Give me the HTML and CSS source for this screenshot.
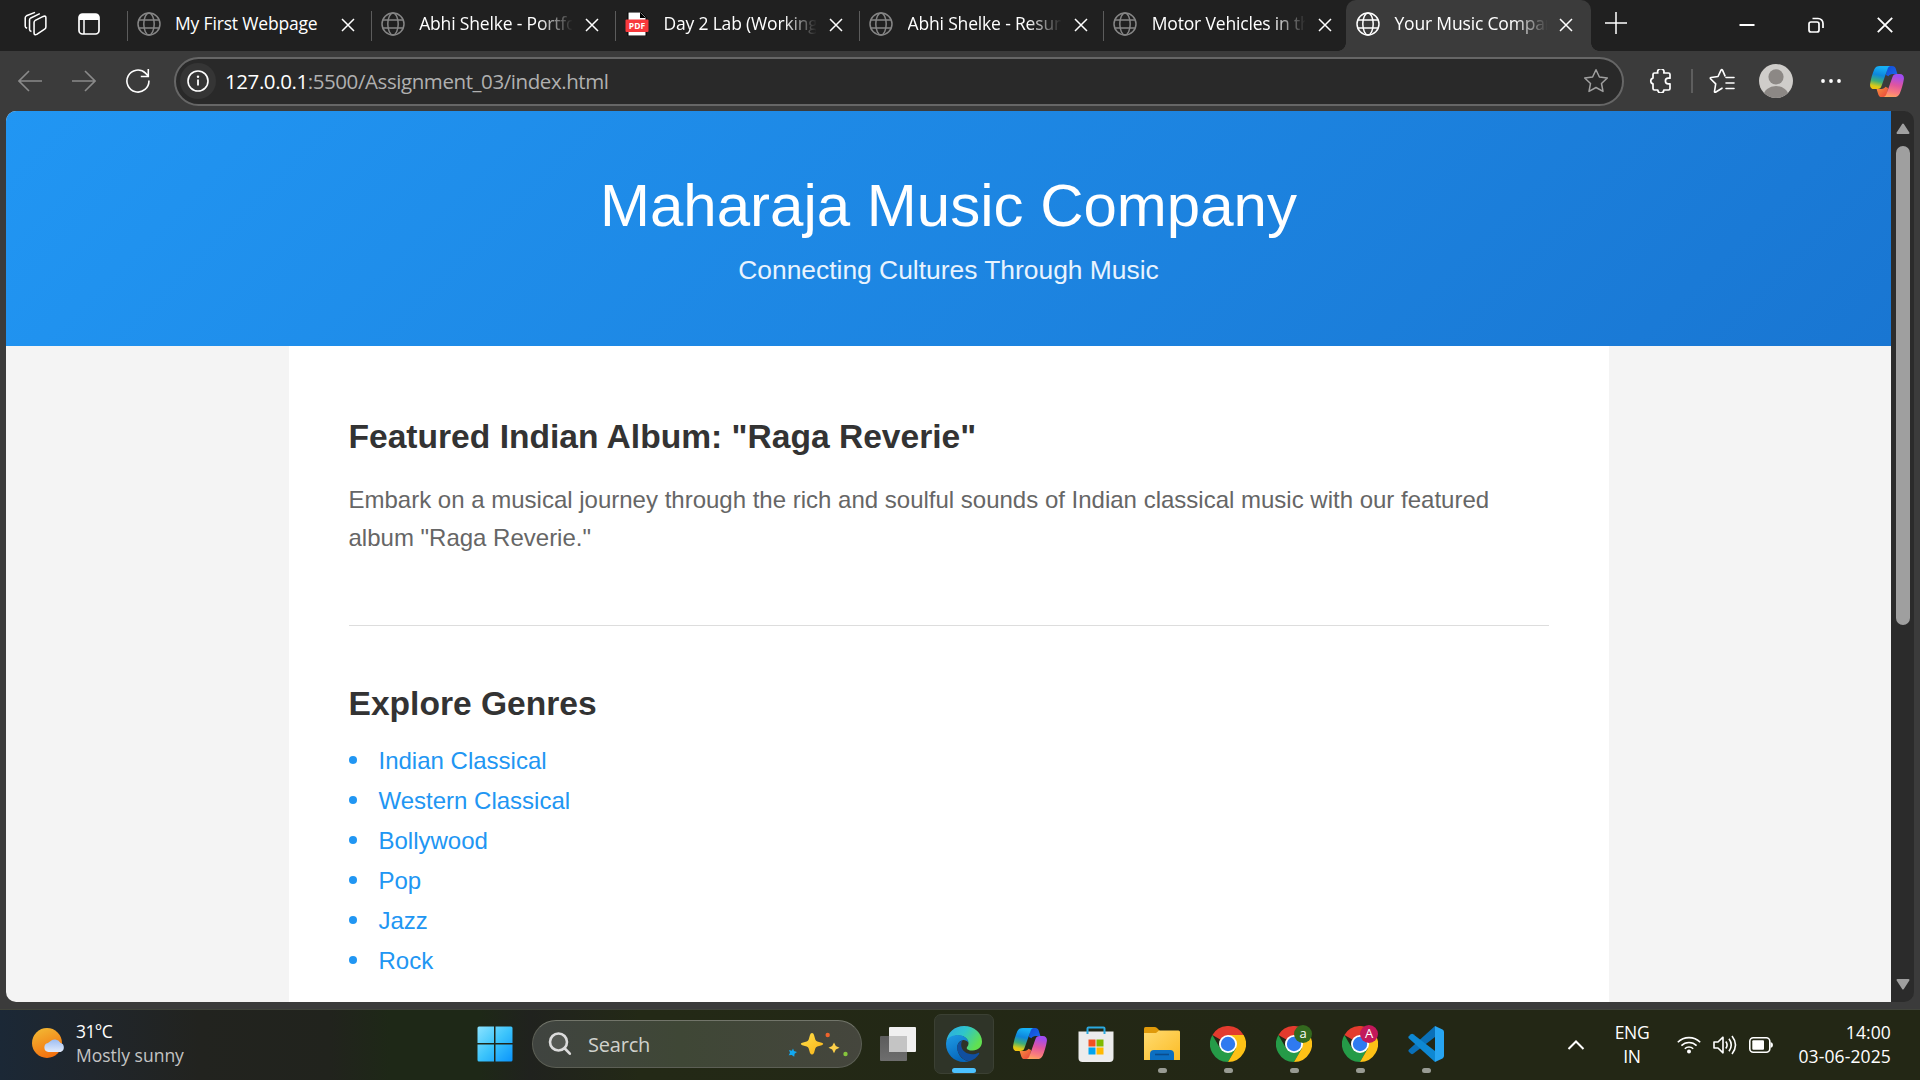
FILE: index.html
```html
<!DOCTYPE html>
<html lang="en">
<head>
<meta charset="utf-8">
<title>Your Music Company</title>
<link rel="stylesheet" href="styles.css">
</head>
<body>
<svg class="defs" width="0" height="0">
  <defs>
    <linearGradient id="cpBlue" x1=".3" y1="0" x2=".1" y2="1"><stop offset="0" stop-color="#17b0f5"/><stop offset=".35" stop-color="#0e86dc"/><stop offset=".62" stop-color="#3fae78"/><stop offset=".85" stop-color="#dccb17"/><stop offset="1" stop-color="#f8c10c"/></linearGradient>
    <linearGradient id="cpPink" x1=".2" y1="0" x2="0" y2="1"><stop offset="0" stop-color="#a14cf0"/><stop offset=".4" stop-color="#e0559f"/><stop offset=".75" stop-color="#fb7f7b"/><stop offset="1" stop-color="#fdb055"/></linearGradient>
    <linearGradient id="cpNavy" x1="0" y1="0" x2="1" y2="1"><stop offset="0" stop-color="#124bd2"/><stop offset="1" stop-color="#1c6af0"/></linearGradient>
    <linearGradient id="cpRed" x1="0" y1="0" x2="1" y2="1"><stop offset="0" stop-color="#f9943e"/><stop offset="1" stop-color="#e8433c"/></linearGradient>
    <linearGradient id="winG" x1="0" y1="0" x2="1" y2="1"><stop offset="0" stop-color="#8be3ff"/><stop offset=".5" stop-color="#3cc4fb"/><stop offset="1" stop-color="#0a94fb"/></linearGradient>
    <linearGradient id="sunG" x1=".3" y1="0" x2=".7" y2="1"><stop offset="0" stop-color="#f2b632"/><stop offset="1" stop-color="#f36c0d"/></linearGradient>
    <linearGradient id="cloudG" x1="0" y1="0" x2="0" y2="1"><stop offset="0" stop-color="#9dbdf2"/><stop offset="1" stop-color="#e2ebfc"/></linearGradient>
    <linearGradient id="edgeTop" x1="0" y1="0" x2="1" y2=".5"><stop offset="0" stop-color="#2ba7e6"/><stop offset=".5" stop-color="#2fc5cb"/><stop offset="1" stop-color="#61e050"/></linearGradient>
    <linearGradient id="edgeMid" x1="0" y1="0" x2=".4" y2="1"><stop offset="0" stop-color="#1f9be5"/><stop offset="1" stop-color="#0668bd"/></linearGradient>
    <linearGradient id="folderG" x1="0" y1="0" x2="1" y2="1"><stop offset="0" stop-color="#ffdb70"/><stop offset="1" stop-color="#fbbc26"/></linearGradient>
    <linearGradient id="starG" x1="0" y1="0" x2="1" y2="1"><stop offset="0" stop-color="#ffe04a"/><stop offset="1" stop-color="#f9b216"/></linearGradient>
    <linearGradient id="viewG" x1="0" y1="0" x2="0" y2="1"><stop offset="0" stop-color="#5c5c5c"/><stop offset="1" stop-color="#6e6e6e"/></linearGradient>
    <symbol id="globe" viewBox="0 0 24 24"><g fill="none" stroke="currentColor" stroke-width="1.5"><circle cx="12" cy="12" r="11"/><ellipse cx="12" cy="12" rx="5.2" ry="11"/><path d="M1.9 8h20.2M1.9 16h20.2"/></g></symbol>
    <symbol id="close" viewBox="0 0 14 14"><path d="M1 1l12 12M13 1L1 13" stroke="currentColor" stroke-width="1.5" fill="none"/></symbol>
    <symbol id="copilot" viewBox="0 0 34 31">
      <path d="M17 0h5.200c2 0 3 .9 3.500 2.600L27.400 8h-4.500c-2.500 0-3.700 1-4.400 2.200L16 9z" fill="url(#cpNavy)"/>
      <path d="M17 31h-5.200c-2 0-3-.9-3.500-2.600L6.600 23h4.500c2.500 0 3.700-1 4.400-2.200L18 22z" fill="url(#cpRed)"/>
      <path d="M10 0h10.400c-1.700.4-2.500 1.700-3 3.500l-5.700 16.100c-.7 2.400-1.900 3.500-4.300 3.500H4.200C1 23.100-.4 20.700.2 17.500.8 13.500 2.300 7.900 4.200 3.600 5.300 1.100 7 0 10 0z" fill="url(#cpBlue)"/>
      <path d="M24 31H13.600c1.700-.4 2.500-1.700 3-3.500l5.700-16.100c.7-2.400 1.900-3.500 4.300-3.500h3.200c3.200 0 4.600 2.400 4 5.600-.6 4-2.100 9.600-4 13.900C28.700 29.900 27 31 24 31z" fill="url(#cpPink)"/>
    </symbol>
    <symbol id="chrome" viewBox="0 0 36 36">
      <path d="M18 18L2.400 9A18 18 0 0 1 33.600 9z" fill="#e33b2e"/>
      <path d="M25.800 22.500L18 36A18 18 0 0 1 2.400 9l7.800 13.500z" fill="#259b48"/>
      <path d="M33.600 9H18v9l7.800 4.500L18 36A18 18 0 0 0 33.600 9z" fill="#fdc116"/>
      <circle cx="18" cy="18" r="9" fill="#fff"/><circle cx="18" cy="18" r="7.200" fill="#2f7af0"/>
    </symbol>
  </defs>
</svg>

<div class="screen">
  <div class="tabstrip">
    <div class="strip-tools">
      <svg width="26" height="26" viewBox="0 0 26 26" fill="none" stroke="#fff" stroke-width="1.600" stroke-linejoin="round"><path d="M11.500 11.500q0-1.500 1.300-2.200l8.200-4.200q2.800-1 2.800 1.500v9.500q0 1.500-1.300 2.200l-8.200 5.500q-2.800 1-2.800-1.500z"/><path d="M8.800 20.800q-2-.5-2-2V8.900q0-1.500 1.300-2.200l9.400-4.500"/><path d="M4.300 17.500q-2-.7-2-2.200V6.700q0-1.500 1.300-2.200L12.500.9"/></svg>
      <svg width="22" height="22" viewBox="0 0 22 22"><rect x="1" y="1" width="20" height="20" rx="3.500" fill="none" stroke="#fff" stroke-width="1.700"/><path d="M1 7V4a3 3 0 0 1 3-3h14a3 3 0 0 1 3 3v3z" fill="#fff"/><path d="M6 7v14" stroke="#fff" stroke-width="1.500"/></svg>
    </div>
    <div class="tab"><svg class="fav"><use href="#globe"/></svg><span class="tab-title">My First Webpage</span><svg class="x"><use href="#close"/></svg></div>
    <div class="tab"><svg class="fav"><use href="#globe"/></svg><span class="tab-title fade">Abhi Shelke - Portfolio</span><svg class="x"><use href="#close"/></svg></div>
    <div class="tab"><svg class="fav" viewBox="0 0 24 24"><path d="M3 0h13l5 5v19H3z" fill="#fff" stroke="#000"/><path d="M15 0v6h6z" fill="#000"/><rect x=".5" y="7.500" width="23" height="12.500" rx="1" fill="#f8393c"/><text x="12" y="17" class="pdf-text">PDF</text></svg><span class="tab-title fade">Day 2 Lab (Working)</span><svg class="x"><use href="#close"/></svg></div>
    <div class="tab"><svg class="fav"><use href="#globe"/></svg><span class="tab-title fade">Abhi Shelke - Resume</span><svg class="x"><use href="#close"/></svg></div>
    <div class="tab"><svg class="fav"><use href="#globe"/></svg><span class="tab-title fade">Motor Vehicles in the</span><svg class="x"><use href="#close"/></svg></div>
    <div class="tab active"><svg class="fav"><use href="#globe"/></svg><span class="tab-title fade">Your Music Company</span><svg class="x"><use href="#close"/></svg></div>
    <svg class="newtab" width="22" height="22" viewBox="0 0 22 22"><path d="M11 0v22M0 11h22" stroke="#fff" stroke-width="1.500"/></svg>
    <div class="winctl">
      <svg width="16" height="16" viewBox="0 0 16 16"><path d="M.5 8h15" stroke="#fff" stroke-width="2"/></svg>
      <svg width="16" height="16" viewBox="0 0 16 16" fill="none" stroke="#fff" stroke-width="1.700"><rect x="1" y="5" width="10" height="10" rx="2"/><path d="M4.500 1.500H10a5 5 0 0 1 5 5V11"/></svg>
      <svg width="16" height="16" viewBox="0 0 14 14"><path d="M.7.7l12.600 12.600M13.300.7L.7 13.300" stroke="#fff" stroke-width="1.600"/></svg>
    </div>
  </div>

  <div class="toolbar">
    <div class="nav">
      <svg width="24" height="24" viewBox="0 0 24 24" class="dim"><path d="M24 12H1M11 2L1 12l10 10"/></svg>
      <svg width="24" height="24" viewBox="0 0 24 24" class="dim"><path d="M0 12h23M13 2l10 10-10 10"/></svg>
      <svg width="24" height="24" viewBox="0 0 24 24" class="lit"><path d="M22.900 11.500A11 11 0 1 1 19.500 4.100L22 6.800M22.300 0v7.500h-7.500"/></svg>
    </div>
    <div class="address">
      <span class="info"><svg width="22" height="22" viewBox="0 0 22 22"><circle cx="11" cy="11" r="10" fill="none" stroke="#fff" stroke-width="1.600"/><path d="M11 9.500v6" stroke="#fff" stroke-width="1.800"/><circle cx="11" cy="6.800" r="1.200" fill="#fff"/></svg></span>
      <span class="url"><b>127.0.0.1</b>:5500/Assignment_03/index.html</span>
      <svg width="26" height="26" viewBox="0 0 26 26" fill="none" stroke="#a0a0a0" stroke-width="1.500" stroke-linejoin="round"><path d="M13 1.800l3.400 7.200 7.900 1-5.800 5.500 1.500 7.900-7-3.900-7 3.900 1.500-7.900L1.700 10l7.900-1z"/></svg>
    </div>
    <div class="actions">
      <svg width="24" height="24" viewBox="0 0 24 24" fill="none" stroke="#fff" stroke-width="1.700" stroke-linejoin="round"><path d="M4 5.500Q4 4 5.500 4h3.300a3.200 3.200 0 1 1 6 0h4.700Q21 4 21 5.500v3.700h-1.800a2.800 2.800 0 0 0 0 5.600H21v4.700q0 1.500-1.500 1.500h-4.700a3 3 0 0 1-6 0H5.500Q4 21 4 19.500v-4.600a3 3 0 0 1 0-5.800z"/></svg>
      <i class="vline"></i>
      <svg width="26" height="26" viewBox="0 0 26 26" fill="none" stroke="#fff" stroke-width="1.600" stroke-linejoin="round" stroke-linecap="round"><path d="M13 20.200l-6.500 4q-1.200.4-1-.9l1.200-7.400L1.500 10.700q-.7-1 .6-1.200l6.900-1L12 2.200q.8-1.200 1.500 0l2.500 5.600M17 9.500h8M17 15h8M17 20.500h8"/></svg>
      <svg width="34" height="34" viewBox="0 0 34 34"><clipPath id="av"><circle cx="17" cy="17" r="17"/></clipPath><g clip-path="url(#av)"><rect width="34" height="34" fill="#cfcdca"/><circle cx="17" cy="12.800" r="7.600" fill="#8c8885"/><ellipse cx="17" cy="32" rx="12.500" ry="10" fill="#8c8885"/></g></svg>
      <svg width="20" height="6" viewBox="0 0 20 6" fill="#fff"><circle cx="2" cy="3" r="1.900"/><circle cx="10" cy="3" r="1.900"/><circle cx="18" cy="3" r="1.900"/></svg>
      <svg class="side" width="34" height="31"><use href="#copilot"/></svg>
    </div>
  </div>

  <div class="viewport">
    <div class="page">
      <header class="hero">
        <h1>Maharaja Music Company</h1>
        <p>Connecting Cultures Through Music</p>
      </header>
      <main class="content">
        <section class="album">
          <h2>Featured Indian Album: "Raga Reverie"</h2>
          <p>Embark on a musical journey through the rich and soulful sounds of Indian classical music with our featured album "Raga Reverie."</p>
        </section>
        <section class="genres">
          <h2>Explore Genres</h2>
          <ul>
            <li>Indian Classical</li><li>Western Classical</li><li>Bollywood</li><li>Pop</li><li>Jazz</li><li>Rock</li>
          </ul>
        </section>
      </main>
    </div>
    <div class="scrollbar">
      <svg width="14" height="12" viewBox="0 0 14 12"><path d="M7 1.500L12.500 10h-11z" fill="#9f9f9f" stroke="#9f9f9f" stroke-width="2" stroke-linejoin="round"/></svg>
      <i class="thumb"></i>
      <svg width="14" height="12" viewBox="0 0 14 12"><path d="M7 10.500L12.500 2h-11z" fill="#9f9f9f" stroke="#9f9f9f" stroke-width="2" stroke-linejoin="round"/></svg>
    </div>
  </div>

  <div class="taskbar">
    <div class="weather">
      <svg width="34" height="32" viewBox="0 0 34 32"><circle cx="15" cy="15" r="15" fill="url(#sunG)"/><path d="M16.500 24a4.500 4.500 0 0 1-.5-8.900 5.500 5.500 0 0 1 2-1.700 6.500 6.500 0 0 1 10.300 1.400A4.800 4.800 0 0 1 28.500 24z" fill="url(#cloudG)"/></svg>
      <div class="weather-text"><span>31°C</span><span class="muted">Mostly sunny</span></div>
    </div>
    <div class="dock">
      <svg class="start" width="36" height="36" viewBox="0 0 36 36" fill="url(#winG)"><path d="M2 .5h15v16.500H.5V2Q.5.500 2 .5zM18.500.5h15.500q1.500 0 1.500 1.500v15h-17zM.5 18.500H17v17H2Q.5 35.500.5 34zM18.500 18.500h17V34q0 1.500-1.500 1.500H18.500z"/></svg>
      <div class="search">
        <svg width="24" height="24" viewBox="0 0 24 24" fill="none" stroke="#dcdcdc" stroke-width="2.600" stroke-linecap="round"><circle cx="10.500" cy="10" r="8.500" fill="#ffffff1c"/><path d="M16.800 16.500l5 5.200"/></svg>
        <span>Search</span>
        <svg width="62" height="26" viewBox="0 0 62 26"><path d="M24 2q1.500 0 2 2l1.300 4.500q.5 1.500 2 2l4.400 1.300q3 1.200 0 2.400l-4.400 1.300q-1.500.5-2 2L26 22q-2 3-4 0l-1.300-4.500q-.5-1.500-2-2l-4.400-1.300q-3-1.200 0-2.400l4.400-1.300q1.500-.5 2-2L22 4q.5-2 2-2z" fill="url(#starG)"/><path d="M46 11.500l1.800 3.500 3.700 1.800-3.700 1.800-1.800 3.700-1.800-3.700-3.700-1.800 3.700-1.800z" fill="#fdd049"/><path d="M5 17.500l1 2.600 3 .9-2.400 1.800-.4 2.900-2.500-1.800-3 .3 1.300-2.500-1-2.600 2.900.6z" fill="#12a8f0"/><circle cx="39.700" cy="4" r="2.200" fill="#f0642c"/><circle cx="57.500" cy="23" r="2.200" fill="#86c53c"/></svg>
      </div>
      <div class="apps">
        <div class="app"><svg width="36" height="34" viewBox="0 0 36 34"><rect x="9" width="27" height="25" rx="1" fill="#f0f0f0"/><rect y="9" width="27" height="25" rx="1" fill="url(#viewG)"/><path d="M9 9h18v16H9z" fill="#c4c4c4"/></svg></div>
        <div class="app current"><svg width="36" height="36" viewBox="0 0 36 36"><path d="M.3 16C1.200 6.500 8.600 0 18 0c10.500 0 18 7.500 18 15.500 0 5.500-4 9-9.300 9-3.500 0-6-1.100-6-2.600 0-1 1.800-1.800 1.800-4.400C22.500 13 18 9.500 12.500 9.500 7 9.500 2.500 12 .3 16z" fill="url(#edgeTop)"/><path d="M0 18c0-5 5-8.900 11.500-8.900 6 0 10.500 3.300 11 7.600-1.500-2.200-4-2.900-6-2.500-3.500.8-5.500 4-5.200 8C11.700 29 17 35 23.500 35.200 21.800 35.800 20 36 18 36 8 36 0 28 0 18z" fill="url(#edgeMid)"/><path d="M16.500 14.200C12.500 16 10.800 19 11.300 23c.7 6 6 11.500 12.200 12.300 4-1.300 7.500-4 9.600-7.300.5-1-.3-1.400-1-1-1.700.9-3.600 1.300-5.600 1.300-6.500 0-11.300-4.200-11.300-9.300 0-2 .5-3.600 1.300-4.800z" fill="#104fa0"/></svg><i></i></div>
        <div class="app"><svg width="34" height="31"><use href="#copilot"/></svg></div>
        <div class="app"><svg width="36" height="36" viewBox="0 0 36 36"><path d="M.5 5.500h35V32q0 4-4 4h-27q-4 0-4-4z" fill="#ececec"/><path d="M9.500 8V2.500q0-1 1-1h15q1 0 1 1V8" fill="none" stroke="#2aa9e0" stroke-width="2"/><path d="M10.500 13.500h7v7h-7z" fill="#f25022"/><path d="M18.500 13.500h7v7h-7z" fill="#7fba00"/><path d="M10.500 21.500h7v7h-7z" fill="#00a4ef"/><path d="M18.500 21.500h7v7h-7z" fill="#ffb900"/></svg></div>
        <div class="app open"><svg width="36" height="34" viewBox="0 0 36 34"><path d="M0 1.500Q0 0 1.500 0h9q1.500 0 2.500 1l2.500 2.500V8H0z" fill="#e09a0a"/><path d="M0 6h12l3-2.500h19.500Q36 3.500 36 5v28H0z" fill="url(#folderG)"/><path d="M6 33v-6q0-4 4-4h16q4 0 4 4v6z" fill="#0c6fc2"/><path d="M11 27.500h14" stroke="#0a4c8c" stroke-width="1.600"/></svg><i></i></div>
        <div class="app open"><svg width="36" height="36"><use href="#chrome"/></svg><i></i></div>
        <div class="app open"><svg width="36" height="36"><use href="#chrome"/></svg><span class="badge green">a</span><i></i></div>
        <div class="app open"><svg width="36" height="36"><use href="#chrome"/></svg><span class="badge pink">A</span><i></i></div>
        <div class="app open"><svg width="36" height="36" viewBox="0 0 36 36"><path d="M27 0L1 23.500q-1.300 1.300 0 2.500l2 1.800q1 .8 2.200 0L27 11z" fill="#0a70b8"/><path d="M27 36L1 12.500q-1.300-1.300 0-2.500l2-1.800q1-.8 2.200 0L27 25z" fill="#0e88d3"/><path d="M27 0l7.500 3.600Q36 4.500 36 6v24q0 1.500-1.500 2.400L27 36z" fill="#27a5f2"/></svg><i></i></div>
      </div>
    </div>
    <div class="tray">
      <svg class="chev" width="18" height="12" viewBox="0 0 18 12"><path d="M1.500 10L9 2.500l7.500 7.500" fill="none" stroke="#fff" stroke-width="2"/></svg>
      <div class="lang"><span>ENG</span><span>IN</span></div>
      <svg width="24" height="18" viewBox="0 0 24 18" fill="none" stroke="#fff" stroke-width="1.600"><path d="M.8 6.300a15.800 15.800 0 0 1 22.400 0M4.400 9.600a10.800 10.800 0 0 1 15.200 0M7.800 12.700a6 6 0 0 1 8.400 0"/><circle cx="12" cy="15.500" r="2" fill="#fff" stroke="none"/></svg>
      <svg width="24" height="20" viewBox="0 0 24 20" fill="none" stroke="#fff" stroke-width="1.600" stroke-linejoin="round"><path d="M1 7v6h4l5 4.800V2.200L5 7zM12.800 6.500q2.600 3.500 0 7M16 3.800q4.500 6.200 0 12.400M19 1q7 9 0 18"/></svg>
      <svg width="24" height="16" viewBox="0 0 24 16"><rect x=".8" y=".8" width="20" height="14.400" rx="3.500" fill="none" stroke="#fff" stroke-width="1.600"/><rect x="3.300" y="3.300" width="11.700" height="9.400" rx="1" fill="#fff"/><path d="M21.500 5q2.500.5 2.500 3t-2.500 3z" fill="#fff"/></svg>
      <div class="clock"><span>14:00</span><span>03-06-2025</span></div>
    </div>
  </div>
</div>
</body>
</html>
```

FILE: styles.css
```css
* { box-sizing: border-box; }
body { margin: 0; overflow: hidden; font-family: "Open Sans", "Noto Sans", sans-serif; color: #fff; }
.defs { position: absolute; }
svg { display: block; flex: none; }
.screen { width: 1920px; height: 1080px; display: flex; flex-direction: column; background: #3b3b3b; overflow: hidden; }

/* tab strip */
.tabstrip { height: 51px; flex: none; display: flex; background: #202020; }
.strip-tools { width: 126.500px; display: flex; gap: 30px; padding: 11px 0 0 23px; flex: none; }
.strip-tools svg:first-child { width: 25px; }
.strip-tools svg + svg { margin-top: 2px; }
.tab { width: 244.200px; height: 51px; flex: none; display: flex; padding: 12px 0 0 10px; position: relative; }
.tab::before { content: ""; position: absolute; left: 0; top: 11px; width: 1px; height: 30px; background: #5c5c5c; }
.tab.active { width: 245px; margin-left: -1.500px; background: #3b3b3b; border-radius: 10px 10px 0 0; }
.tab.active::before, .tab.active::after { top: auto; bottom: 0; width: 8px; height: 8px; background: radial-gradient(circle at 0 0, transparent 7.500px, #3b3b3b 8px); }
.tab.active::before { left: -8px; }
.tab.active::after { content: ""; position: absolute; right: -8px; background: radial-gradient(circle at 100% 0, transparent 7.500px, #3b3b3b 8px); }
.fav { width: 24px; height: 24px; color: #858585; }
.active .fav { color: #fff; }
.pdf-text { font: 700 8.500px "Open Sans", sans-serif; fill: #fff; text-anchor: middle; }
.tab-title { width: 153px; margin-left: 14.500px; font-size: 17.500px; line-height: 23px; letter-spacing: -.17px; white-space: nowrap; overflow: hidden; }
.fade { -webkit-mask-image: linear-gradient(90deg, #000 120px, transparent 154px); mask-image: linear-gradient(90deg, #000 120px, transparent 154px); }
.x { width: 14px; height: 14px; margin: 6px 0 0 13px; }
.active .x { margin-left: 11.500px; }
.newtab { margin: 12px 0 0 14px; }
.winctl { margin-left: auto; display: flex; gap: 53px; padding: 17px 27px 0 0; }

/* toolbar */
.toolbar { height: 60px; flex: none; display: flex; align-items: center; padding-left: 18px; }
.nav { display: flex; gap: 30px; width: 156px; }
.nav svg { fill: none; stroke-width: 1.600; }
.dim { stroke: #8a8a8a; }
.lit { stroke: #fff; }
.address { width: 1450px; height: 49px; border: 2px solid #666; border-radius: 25px; background: #292929; display: flex; align-items: center; padding: 0 13px 0 4px; }
.info { width: 36px; height: 36px; border-radius: 50%; background: #353535; display: flex; align-items: center; justify-content: center; }
.url { flex: 1; margin-left: 9px; font-size: 20.500px; line-height: 28px; letter-spacing: -.42px; color: #b0b0b0; }
.url b { font-weight: 400; color: #fff; }
.actions { display: flex; align-items: center; padding-left: 25px; }
.vline { width: 2px; height: 24px; margin: 0 17px 0 18px; background: #5e5e5e; }
.actions svg:nth-of-type(2) { margin-left: -1px; }
.actions svg:nth-of-type(3) { margin-left: 24px; }
.actions svg:nth-of-type(4) { margin-left: 28px; }
.actions .side { margin-left: 29px; }

/* web page */
.viewport { margin: 0 6px; height: 891px; flex: none; display: flex; border-radius: 10px; overflow: hidden; background: #2b2b2b; }
.page { width: 1885px; background: #f4f4f4; font-family: "Liberation Sans", Arial, sans-serif; overflow: hidden; }
.hero { height: 235px; padding-top: 60px; background: linear-gradient(135deg, #2196f3, #1976d2); text-align: center; }
.hero h1 { margin: 0; font-size: 60px; line-height: 69px; font-weight: 400; }
.hero p { margin: 15px 0 0; font-size: 26.400px; line-height: 30px; color: #e8f3fe; }
.content { width: 1320px; height: 700px; margin: 0 auto; padding: 60px; background: #fff; color: #666; font-size: 24px; }
.content h2 { margin: 0; color: #333; font-size: 33.600px; line-height: 40px; font-weight: 700; }
.album { height: 220px; padding-top: 11px; border-bottom: 1px solid #ddd; }
.album p { margin: 24px 0 0; line-height: 38px; }
.genres { padding-top: 58px; }
.genres ul { list-style: none; margin: 17px 0 0; padding: 0; color: #2196f3; }
.genres li { display: flex; align-items: center; height: 40px; }
.genres li::before { content: ""; width: 8px; height: 8px; margin: 0 22px 2px 0; border-radius: 50%; background: #2196f3; }
.scrollbar { flex: 1; display: flex; flex-direction: column; align-items: center; padding: 12px 0; }
.thumb { width: 14px; height: 479px; margin: 11px 0 auto; border-radius: 7px; background: #9f9f9f; }

/* taskbar */
.taskbar { height: 71px; margin-top: 7px; flex: none; display: flex; font-size: 17.500px; border-top: 1px solid #41443b; background: linear-gradient(90deg, #1b2836 0, #20262c 90px, #22231f 200px, #21231d 330px, #1e2817 390px, #1e2817 480px, #20221e 530px, #232916 640px, #232715 1300px, #232715 100%); }
.weather { width: 476.500px; display: flex; gap: 10px; padding: 18px 0 0 32px; }
.weather-text { margin-top: -9px; }
.weather-text span { display: block; line-height: 24px; letter-spacing: -.6px; }
.weather-text .muted { color: #c4c4c4; letter-spacing: 0; }
.dock { display: flex; }
.start { margin: 16px 19.500px 0 0; }
.search { width: 330px; height: 48px; margin-top: 10px; padding: 0 11px 0 15px; display: flex; align-items: center; border: 1px solid #5c5f55; border-top-color: #72756a; border-radius: 24px; background: linear-gradient(90deg, #404440, #3f4736 45%, #45463d); font-size: 20px; color: #d0d2cd; }
.search span { flex: 1; margin-left: 16px; letter-spacing: -.2px; }
.apps { display: flex; gap: 6px; margin: 4px 0 0 6px; }
.app { width: 60px; height: 60px; display: flex; justify-content: center; align-items: center; padding-bottom: 1px; position: relative; }
.current { border: 1px solid #3b4033; border-radius: 7px; background: #2f3428; }
.app i { position: absolute; left: 50%; bottom: 1px; width: 9px; height: 5px; margin-left: -4px; border-radius: 3px; background: #989b93; }
.current i { width: 24px; margin-left: -12px; bottom: 0; background: #4cc2ff; }
.badge { position: absolute; left: 30px; top: 11px; width: 18px; height: 18px; border-radius: 50%; font-size: 13px; line-height: 17px; text-align: center; }
.green { background: #33691e; }
.pink { background: #c2185b; }
.tray { margin-left: auto; display: flex; padding: 0 29px 1px 0; align-items: center; gap: 12px; }
.chev { margin-right: 15px; }
.lang, .clock { display: flex; flex-direction: column; line-height: 23.500px; }
.lang { width: 40px; align-items: center; margin-right: 13px; letter-spacing: -.4px; }
.clock { width: 106px; align-items: flex-end; letter-spacing: .12px; line-height: 24px; padding-bottom: 2px; }
```
